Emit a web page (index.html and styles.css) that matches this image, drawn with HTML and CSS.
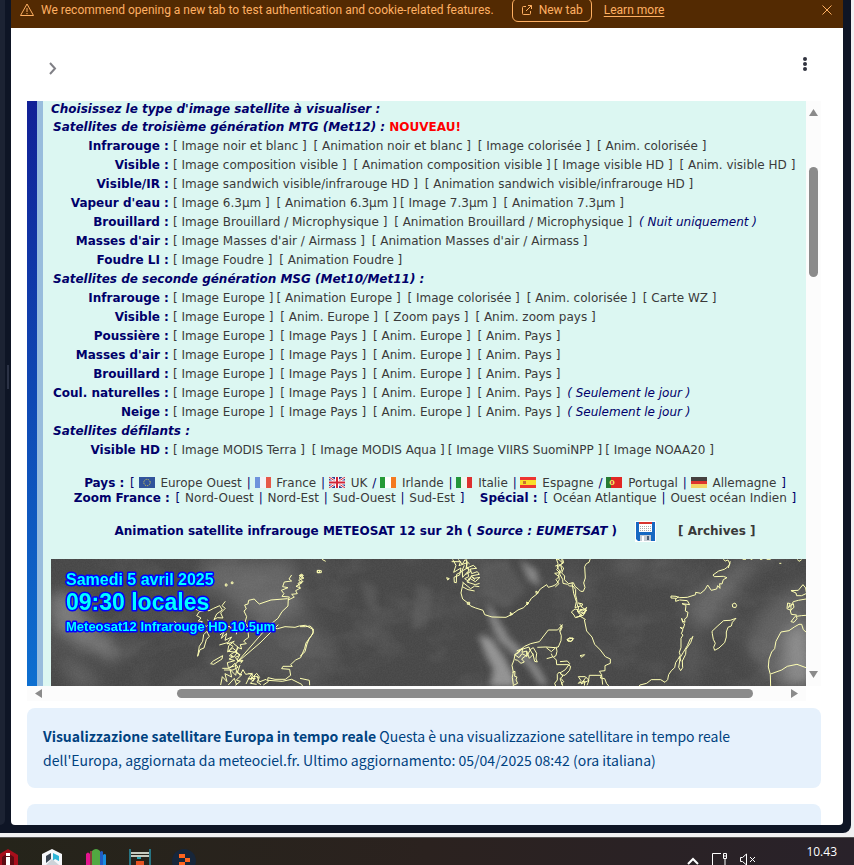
FILE: index.html
```
<!DOCTYPE html>
<html lang="it">
<head>
<meta charset="utf-8">
<meta name="viewport" content="width=device-width, initial-scale=1">
<title>Visualizzazione satellitare Europa</title>
<link rel="stylesheet" href="styles.css">
</head>
<body>
<div class="window">
  <div class="side-panel"></div>
  <div class="resizer"><span class="resizer-grip"></span></div>
  <div class="preview">
    <div class="notice">
      <svg class="notice-icon" width="16" height="16" viewBox="0 0 16 16" fill="none" stroke="currentColor"><path d="M8 2 1.500 13.500h13Z" stroke-linejoin="round"/><path d="M8 6v4M8 11v1.200"/></svg>
      <span class="notice-text">We recommend opening a new tab to test authentication and cookie-related features.</span>
      <button class="new-tab" type="button"><svg width="12" height="12" viewBox="0 0 12 12" fill="none" stroke="currentColor"><path d="M5 2.500H2.500a1 1 0 0 0-1 1v6a1 1 0 0 0 1 1h6a1 1 0 0 0 1-1V7M7 1.500h3.500V5M10.500 1.500 5 7"/></svg>New tab</button>
      <a class="learn" href="#">Learn more</a>
      <button class="close" type="button" aria-label="Close"><svg width="12" height="12" viewBox="0 0 12 12" stroke="currentColor" fill="none"><path d="m1.500 1.500 9 9m0-9-9 9"/></svg></button>
    </div>
    <header class="toolbar">
      <button class="icon-button expand" type="button" aria-label="Expand"><svg width="20" height="20" viewBox="0 0 20 20" fill="none" stroke="#808086" stroke-width="2"><path d="m7 5 5 5.500L7 16"/></svg></button>
      <button class="icon-button" type="button" aria-label="Menu"><svg width="20" height="20" viewBox="0 0 20 20" fill="#31333f"><circle cx="10" cy="5" r="2"/><circle cx="10" cy="10" r="2"/><circle cx="10" cy="15" r="2"/></svg></button>
    </header>
    <main class="content">
      <section class="frame">
        <div class="site">
          <div class="stripe-dark"></div>
          <div class="stripe-light"></div>
          <div class="page">
            <h1 class="choose">Choisissez le type d'image satellite à visualiser :</h1>
            <table class="types">
              <tbody>
              <tr><th class="group" colspan="2">Satellites de troisième génération MTG (Met12) : <span class="new">NOUVEAU!</span></th></tr>
              <tr><th>Infrarouge :</th><td><a href="#">[ Image noir et blanc ]</a> <a href="#">[ Animation noir et blanc ]</a> <a href="#">[ Image colorisée ]</a> <a href="#">[ Anim. colorisée ]</a></td></tr>
              <tr><th>Visible :</th><td><a href="#">[ Image composition visible ]</a> <a href="#">[ Animation composition visible ]</a><a href="#">[ Image visible HD ]</a> <a href="#">[ Anim. visible HD ]</a></td></tr>
              <tr><th>Visible/IR :</th><td><a href="#">[ Image sandwich visible/infrarouge HD ]</a> <a href="#">[ Animation sandwich visible/infrarouge HD ]</a></td></tr>
              <tr><th>Vapeur d'eau :</th><td><a href="#">[ Image 6.3µm ]</a> <a href="#">[ Animation 6.3µm ]</a><a href="#">[ Image 7.3µm ]</a> <a href="#">[ Animation 7.3µm ]</a></td></tr>
              <tr><th>Brouillard :</th><td><a href="#">[ Image Brouillard / Microphysique ]</a> <a href="#">[ Animation Brouillard / Microphysique ]</a> <i>( Nuit uniquement )</i></td></tr>
              <tr><th>Masses d'air :</th><td><a href="#">[ Image Masses d'air / Airmass ]</a> <a href="#">[ Animation Masses d'air / Airmass ]</a></td></tr>
              <tr><th>Foudre LI :</th><td><a href="#">[ Image Foudre ]</a> <a href="#">[ Animation Foudre ]</a></td></tr>
              <tr><th class="group" colspan="2">Satellites de seconde génération MSG (Met10/Met11) :</th></tr>
              <tr><th>Infrarouge :</th><td><a href="#">[ Image Europe ]</a><a href="#">[ Animation Europe ]</a> <a href="#">[ Image colorisée ]</a> <a href="#">[ Anim. colorisée ]</a> <a href="#">[ Carte WZ ]</a></td></tr>
              <tr><th>Visible :</th><td><a href="#">[ Image Europe ]</a> <a href="#">[ Anim. Europe ]</a> <a href="#">[ Zoom pays ]</a> <a href="#">[ Anim. zoom pays ]</a></td></tr>
              <tr><th>Poussière :</th><td><a href="#">[ Image Europe ]</a> <a href="#">[ Image Pays ]</a> <a href="#">[ Anim. Europe ]</a> <a href="#">[ Anim. Pays ]</a></td></tr>
              <tr><th>Masses d'air :</th><td><a href="#">[ Image Europe ]</a> <a href="#">[ Image Pays ]</a> <a href="#">[ Anim. Europe ]</a> <a href="#">[ Anim. Pays ]</a></td></tr>
              <tr><th>Brouillard :</th><td><a href="#">[ Image Europe ]</a> <a href="#">[ Image Pays ]</a> <a href="#">[ Anim. Europe ]</a> <a href="#">[ Anim. Pays ]</a></td></tr>
              <tr><th>Coul. naturelles :</th><td><a href="#">[ Image Europe ]</a> <a href="#">[ Image Pays ]</a> <a href="#">[ Anim. Europe ]</a> <a href="#">[ Anim. Pays ]</a> <i>( Seulement le jour )</i></td></tr>
              <tr><th>Neige :</th><td><a href="#">[ Image Europe ]</a> <a href="#">[ Image Pays ]</a> <a href="#">[ Anim. Europe ]</a> <a href="#">[ Anim. Pays ]</a> <i>( Seulement le jour )</i></td></tr>
              <tr><th class="group" colspan="2">Satellites défilants :</th></tr>
              <tr><th>Visible HD :</th><td><a href="#">[ Image MODIS Terra ]</a> <a href="#">[ Image MODIS Aqua ]</a><a href="#">[ Image VIIRS SuomiNPP ]</a><a href="#">[ Image NOAA20 ]</a></td></tr>
              </tbody>
            </table>
            <p class="regions"><b>Pays :</b> [
              <svg class="flag" viewBox="0 0 16 11"><path fill="#31539b" d="M0 0h16v11H0z"/><circle cx="8" cy="5.500" r="3.200" fill="none" stroke="#e3d44b" stroke-dasharray="1 1"/></svg> <a href="#">Europe Ouest</a> |
              <svg class="flag" viewBox="0 0 16 11"><path fill="#f2f3f7" d="M0 0h16v11H0z"/><path fill="#6f93dc" d="M0 0h5v11H0z"/><path fill="#e65848" d="M11 0h5v11h-5z"/></svg> <a href="#">France</a> |
              <svg class="flag" viewBox="0 0 16 11"><path fill="#2f4391" d="M0 0h16v11H0z"/><path stroke="#fff" stroke-width="2.500" d="m0 0 16 11M16 0 0 11"/><path stroke="#d22536" d="m0 0 16 11M16 0 0 11"/><path stroke="#fff" stroke-width="4" d="M8 0v11M0 5.500h16"/><path stroke="#d22536" stroke-width="2" d="M8 0v11M0 5.500h16"/></svg> <a href="#">UK</a> /
              <svg class="flag" viewBox="0 0 16 11"><path fill="#fff" d="M0 0h16v11H0z"/><path fill="#269a37" d="M0 0h5v11H0z"/><path fill="#f47a20" d="M11 0h5v11h-5z"/></svg> <a href="#">Irlande</a> |
              <svg class="flag" viewBox="0 0 16 11"><path fill="#f4f4f0" d="M0 0h16v11H0z"/><path fill="#23963a" d="M0 0h5v11H0z"/><path fill="#dd3030" d="M11 0h5v11h-5z"/></svg> <a href="#">Italie</a> |
              <svg class="flag" viewBox="0 0 16 11"><path fill="#ed3530" d="M0 0h16v11H0z"/><path fill="#fadd28" d="M0 3h16v5H0z"/><path fill="#c8702d" d="M3 4h3v3H3z"/></svg> <a href="#">Espagne</a> /
              <svg class="flag" viewBox="0 0 16 11"><path fill="#e12724" d="M0 0h16v11H0z"/><path fill="#277b32" d="M0 0h5v11H0z"/><circle cx="6" cy="5.500" r="2.500" fill="#f0e45c"/><path fill="#df4c4c" d="M5 4h2v3H5z"/></svg> <a href="#">Portugal</a> |
              <svg class="flag" viewBox="0 0 16 11"><path fill="#dd332f" d="M0 0h16v11H0z"/><path fill="#44403e" d="M0 0h16v4H0z"/><path fill="#f3d365" d="M0 7h16v4H0z"/></svg> <a href="#">Allemagne</a> ]</p>
            <p class="regions"><b>Zoom France :</b> [ <a href="#">Nord-Ouest</a> | <a href="#">Nord-Est</a> | <a href="#">Sud-Ouest</a> | <a href="#">Sud-Est</a> ] &nbsp;&nbsp; <b>Spécial :</b> [ <a href="#">Océan Atlantique</a> | <a href="#">Ouest océan Indien</a> ]</p>
            <div class="caption">
              <h2>Animation satellite infrarouge METEOSAT 12 sur 2h ( <i>Source : EUMETSAT</i> )</h2>
              <a href="#" aria-label="Enregistrer"><svg class="disk" width="21" height="21" viewBox="0 0 21 21"><path fill="#fff" d="M0 0h21v21H0z"/><path fill="#1769c2" d="M1 1h19v19H3l-2-2z"/><path fill="#fff" d="M4 2h13v9H4z"/><path fill="#d8342f" d="M4 1h13v2H4z"/><path stroke="#aaa" stroke-dasharray="1 1" d="M5 5.500h11M5 7.500h11M5 9.500h11"/><path fill="#c5ccd4" d="M5 14h11v6H5z"/><path fill="#4d5e75" d="M12 15h2v4h-2z"/><path fill="#fff" d="M7 15h2v5H7z"/></svg></a>
              <a href="#">[ Archives ]</a>
            </div>
            <svg class="satellite" viewBox="0 0 755 127" preserveAspectRatio="xMinYMin slice" role="img" aria-label="Image satellite infrarouge">
              <defs>
                <filter id="soft" x="-50%" y="-50%" width="200%" height="200%"><feGaussianBlur stdDeviation="24"/></filter>
                <filter id="mist" x="-50%" y="-50%" width="200%" height="200%"><feGaussianBlur stdDeviation="9"/></filter>
                <filter id="grain" x="0" y="0" width="100%" height="100%"><feTurbulence type="fractalNoise" baseFrequency=".7" numOctaves="2" seed="4"/><feColorMatrix values="0 0 0 0 .6  0 0 0 0 .6  0 0 0 0 .6  .5 0 0 0 -.12"/></filter>
                <filter id="streaks" x="0" y="0" width="100%" height="100%"><feTurbulence type="fractalNoise" baseFrequency=".02 .03" numOctaves="4" seed="9"/><feColorMatrix values="0 0 0 0 .75  0 0 0 0 .75  0 0 0 0 .75  1.600 0 0 0 -.75"/></filter>
              </defs>
              <path fill="#474747" d="M0 0h755v127H0z"/>
              <path d="M0 0h755v127H0z" filter="url(#streaks)" opacity=".15"/>
              <g transform="translate(-31 -9) scale(.3333)">
                <g fill="#aaa" filter="url(#soft)">
                  <path opacity=".5" d="M93 130h60l50 70 50 60 40 50-10 30-60-40-40-10-90-60z"/>
                  <path opacity=".3" d="M100 300l90 50 60 60h-80zM560 30h260l30 150-110 40-80-60-130-60z"/>
                  <path opacity=".12" d="M620 130l250 40 60 160-90 70-200-60z"/>
                </g>
              </g>
              <g transform="translate(249 -9) scale(.3333)">
                <g fill="#bbb" filter="url(#mist)">
                  <path opacity=".65" d="M535 255l35 10 45 60 25 50 10 35h-80l10-50-20-40z"/>
                  <path opacity=".55" d="M560 155l25 35 40 70 90 90 30 55h-25l-40-60-80-70-30-60zM660 30l50 30 10 50-35-20z"/>
                  <path opacity=".12" d="M350 100l50 20-20 110-45 10zM180 90l50 20v80l-30-20zM540 40l80-10 60 90-60 60-80-60z"/>
                </g>
              </g>
              <g transform="translate(509 -9) scale(.3333)">
                <g fill="#bbb" filter="url(#soft)">
                  <path opacity=".25" d="M170 28h100l-40 40-80-10zM490 80l40-50 80-2-80 90-60 90-60 40-40-80 60-70z"/>
                  <path opacity=".22" d="M590 200l60-60 100-50v320h-80l-70-60-40-60zM390 250l30 40-20 110h-25z"/>
                  <path opacity=".5" d="M670 250l50-30 35 20v165h-75z"/>
                </g>
              </g>
              <path d="M0 0h755v127H0z" filter="url(#grain)" opacity=".22"/>
              <g class="coast" transform="translate(-31 -9) scale(.3333)">
                <path d="M616 102h5v6h-5zM634 96h5v5h-5zM892 62h12v6h-12zM815 75l-8 12 8 6-22 3-5 14 16 3-20 8 8 10-6 8 22 2-3 9 18-9-8-8 17-2-5-9 15-8-14-5 17-10-9-8 16-7-15-7 9-5M848 72l-10 12 10 10-14 6 5 10M850 94l-12 8"/>
                <path d="M803 146l-50 4-35 12-10-9-5-6-17 4-2 11-10 3 5 12-7 6 8 17-5 18 8 12-8 8 9 6 2 18-15 11 8 8-18 3 4 13-13-5-3 16 11 8-14 6 9 12 14-3-7 9"/>
                <path d="M805 146l-1 22-18 17-12 20-15 12-15 10 5 7 24 2 22-6 30 2 13-4 18-2 21 11 3 9-7 13-15 20-4 16-12 28-15 7-15 14 5 5-28 0-4 7 24 2 3 18-16 12h-31l-21-5-1 8 44 3 28-6 30 15 5 10v15"/>
                <path d="M775 224l-55 55-68 58M741 233l-95 110 3 18M616 154l-10 13 10 8-14 14 7 15-17-1-10 6 8-17 17-12-8-13-18 8-15 8-7-10-8 10-13 2-8 12 13 7-8 9 12 2-7 10 20 4 9-9-6-11"/>
                <path d="M561 244l-10 10-3 20-10 15-5 30 7-20 12-5 7-25 9-10-5-9zM463 214l6 5-5 3M527 178l11 4"/>
                <path d="M600 255l12-10-8 20 16-15-5 21 20-10-14 21 22-8-17 13-3 19 15-12 11 9-18 11 9 6-13 7 17 5-22 6 3 15 19-5M598 285l24-7 17 11-14 15 27 3-10 14-15-4M572 341l8-8 28-16-2 10-25 16zM607 355h22l16-15 9 12-15 8h-27M640 280l15 12-8 15 13 7-9 16 16 5M615 240l12-12 10 12 16-13-4 26"/>
                <path d="M602 405l5-25 14 15-6-24 20 10-5-23 17 18 3-15 10 15 9-17 8 14 20-3-13 17 22-2-15 15 19 3M660 345l-8 24 14 5-17 16 12 4-15 12M625 405l18-20 7 20M678 402l9-18 13 9 4-15 14 5-7 13 12 8M685 370l13 4-5 13 17-17 9 12M711 378l7 18 20-8 7 7-15 10"/>
              </g>
              <g class="coast" transform="translate(249 -9) scale(.3333)">
                <path d="M66 28l11 6M52 61h7v7h-7zM440 83l8 3-5 4zM0 76h10l-9 12"/>
                <path d="M455 35h27l-5 12 25-9-4 17 22-9 10 9-19 2 4 14 17-6 6 8-25 5 10 7 17-3-14 13-18-11-7 12 25 8 13-4M458 28l10 18-7 21 22-13-4 21-17 7 1 15 6 1 1-25 17-9 1 18 15-17 3 15-12 6 12 8 7-15 12 10M475 28l12 15 8-14 14 13M493 46l-8 18 19-11 3 14M487 96l25 20 12-8 14 2M490 98l-3 12 17 9 20 4M500 28v24l13 12-17 10"/>
                <path d="M487 110l-4 19 5 18 17 13 7 8 15 6 22 7 5 13 22 7 42 1 18-9 18-13 17-7 17-18 6-10 17-13 10-15 19-13 5 8 14-4 10-5 9-14-2-14 4-12-8-11 2-12-5-13 8 2 10 9-3-21 10-9M502 157h7v6h-7zM631 187l7 6-7 3zM680 156l6 4-5 5zM708 123l7 5-7 2zM790 36l-8 8 3 14-6 14 9 16 1 12 14 3 6 5 10 0 8 10 0 18 3 12 2 17 4 9-4 9 7 10M766 48l14-4-10 15 9 9-15 2 13 10-9 9 9 12-11 10"/>
                <path d="M787 224l-14 16-28 0-27 35-26 6-18 8-17 14-12 11-3 16-6 16 4 20-3 16 3 22 0 20M787 224l-8 18 5 15-1 15-8 19-6 1 2 12-3 13-8 4 9 9 1 14 34 0 8 5-3 12-14 15-10-1-7-9-6 7 0 17-8 10 4 11-13 10-15-1M783 385l8 10-7 7 5 5M637 367l8-3-1 15 7 2-3 9 5 10-11 5M801 268l18-4-3 9-12 1zM0 230h17l13-2 10 9-1 14-11 14-7 17-6 23-15 14M0 385l28 6 1 15"/>
                <path d="M650 303l18-8-2 12 14-4 0 17 10-19-3-10-24 8-8 10-11 5 13 9 9-12 12 6-13 10 8 9-10 4-10-9-8-2M680 303l8 22 11-11-9-15 10-6 10 17-2 17 4 9-8-2-6-25M712 292l26-1 29 2-13 12-15-12M740 326l18-5-4-10"/>
              </g>
              <g class="coast" transform="translate(509 -9) scale(.3333)">
                <path d="M8 28l3 10-10 7 10 9-6 15 9 9-1 11 13 12 14-3 5 11 11 9 6 6h8l5-12-4-13 5-15-2-34 5-9 8-4 5-14 22-4 8-4M36 98l5 32 8 25-4 18 19-6-9-8 13 3-4 9 13 8-3 12-20-8 11 14-19 6-4-8-8-9 11-9 23 6 12-11-10 24-22 6M60 178l21 3-23 16 19 12M73 209l7 34 16 18 8 22 17 17 15 20 15 7v13l-16 7 0 15-17 2 7 10-4 10 13 2 6 15 10 11M125 376l3 28M125 376H88l-2 14-10-10-21 0 8 12-8 8 20-7-2 14M78 382l-15 20 24-11-6 15M0 335l22-2 7 8-13 18-16 10M60 317l14-3-8 8zM0 368l9 10-9 8 8 20"/>
                <path d="M22 269l7-6 12 3-9 9zM0 223l7 8-6 13M490 28l6 5 8-3 6 12-7 9-10 7-17 5-17 12 4 5 27-1 11 4-11 6-4 13-7-1 1 14-7-8-3 10-16 4-11-16-8 14-13 11-15-3 0 7-25 8-23 1-11-4-15-1v6l18 1 4-5M511 34l-6 20M360 150l22 2 7 12-23-3 12 5-2 17 8 4-3 15-7 5 1 10-7-4-3-8 3 12 6 5-4 13-10-3 9 7-5 12 5 4-6 10 0 28-5 14 3 10-8 12-6 9-3 15-10 9-8 12-3 15-8 8-13-8H274l-14 11-20 5-12 15-1 18M347 146v8l12-4M398 263l-7 3-9 21-12 20-9 15-5 30 6 10 6-9-1-20 10-20 1-15 14-20 7-20M358 320l5 14M456 244l18-17 17-15 20-1 17-6-11 12-3 11-10 4-5 14 0 15-5 17-17 16-13 7-3-9 5-12-6-12-3-17zM517 163l8-4 5 7-3 7-9-2z"/>
                <path d="M632 408l-1-35-6-22 2-23 8-22 9-10 4-22 15-28 24-4 16-11 14-8 8 0 5 16 8 7M632 372l33-12 17-11 29-6 27 10M738 131l-13 6h-15l-2-8-15-7 22-1 14-17 8 10 2 13M738 147l-23 4-15 4-7 12 0 14-12-5 2-17 8 2-6 12 15-12 2 11-11 10 3 11 16 2-6 6-11 14 9 2 9-11-2-7 15-2 14-1M548 28h10M572 28h5M600 28h7M658 40l6 0M620 28h12M712 28l5 6 8-5"/>
              </g>
              <g class="stamp">
                <text class="stamp-day" x="15" y="26">Samedi 5 avril 2025</text>
                <text class="stamp-hour" x="15" y="51">09:30 locales</text>
                <text class="stamp-source" x="15" y="72">Meteosat12 Infrarouge HD 10.5µm</text>
              </g>
            </svg>
          </div>
        </div>
        <div class="scroll scroll-y">
          <svg width="9" height="8" viewBox="0 0 9 8"><path d="M4.500 0 9 7H0z"/></svg>
          <div class="track"><span class="thumb"></span></div>
          <svg width="9" height="8" viewBox="0 0 9 8"><path d="M4.500 8 9 1H0z"/></svg>
        </div>
        <div class="scroll scroll-x">
          <svg width="8" height="9" viewBox="0 0 8 9"><path d="M0 4.500 7 0v9z"/></svg>
          <div class="track"><span class="thumb"></span></div>
          <svg width="8" height="9" viewBox="0 0 8 9"><path d="M8 4.500 1 0v9z"/></svg>
        </div>
      </section>
      <div class="info"><b>Visualizzazione satellitare Europa in tempo reale</b> Questa è una visualizzazione satellitare in tempo reale dell'Europa, aggiornata da meteociel.fr. Ultimo aggiornamento: 05/04/2025 08:42 (ora italiana)</div>
      <div class="info info-next"></div>
    </main>
  </div>
</div>
<footer class="taskbar">
  <div class="apps">
    <svg viewBox="0 0 24 16"><path fill="#a90f1c" d="m12 0 10 6v10H2V6z"/><path fill="#5c0c13" d="m12 4 6 4v8H6V8z"/><path fill="#fff" d="M10 4h4v3h-4zM10 8h4v8h-4z"/></svg>
    <svg viewBox="0 0 24 16"><path fill="#f5f7fa" d="m12 0 10 5v11H2V5z"/><path fill="#394553" d="m6 7 5-3v6l-5 4z"/><path fill="#2eb5d8" d="m13 4 6 3v5l-4-2-2 2z"/><path fill="#cdd3d9" d="m12 10 7 6H6z"/></svg>
    <svg viewBox="0 0 24 16"><path fill="#e5148e" d="M2 5q2-3 4 0v11H2z"/><path fill="#8a3c3b" d="M6 2h3v14H6z"/><path fill="#51a941" d="M8 2q4-4 8 0v14H8z"/><path fill="#235cc3" d="M16 3q2-2 3 0v13h-3z"/><path fill="#188de0" d="M19 6q2-2 3 0v10h-3z"/></svg>
    <svg viewBox="0 0 24 16"><path fill="#277483" d="M1 0h2v16H1zM21 0h2v16h-2z"/><path fill="#c7cbc0" d="M3 3h18v2H3zM3 6h18v2H3z"/><path fill="#29a5b4" d="M9 8h4v2H9z"/><path fill="#e65423" d="M8 12h8v4H8z"/></svg>
    <svg viewBox="0 0 24 16"><circle cx="12" cy="12" r="12" fill="#17263a"/><path fill="#ff641e" d="M7 5h6v4H7zM13 9h5v4h-5zM7 13h6v3H7z"/></svg>
  </div>
  <div class="tray">
    <svg width="12" height="8" viewBox="0 0 12 8" fill="none" stroke="#fff" stroke-width="2"><path d="m1 7 5-5 5 5"/></svg>
    <svg width="17" height="13" viewBox="0 0 17 13" fill="none" stroke="#fff"><path d="M10 1.500H1.500V13M12.500 1.500h3v5h-3zM12.500 4h3M14 7v6"/></svg>
    <svg width="16" height="12" viewBox="0 0 16 12" fill="none" stroke="#fff"><path d="M.5 4.500h2L6.500 1v11l-4-3.500h-2zM10 4l5 5m0-5-5 5"/></svg>
    <time>10.43</time>
  </div>
</footer>
</body>
</html>
```
FILE: styles.css
```
* { box-sizing: border-box; }
body {
  margin: 0;
  height: 100vh;
  display: flex;
  flex-direction: column;
  overflow: hidden;
  background: #f1f1f2;
  font-family: "Noto Sans CJK JP", sans-serif;
}
a { color: inherit; text-decoration: none; }
button { font: inherit; color: inherit; background: none; border: 0; padding: 0; }

.window {
  flex: 1;
  min-height: 0;
  display: grid;
  grid-template-columns: 5px 6px minmax(0, 1fr);
  grid-template-rows: minmax(0, 1fr);
  margin: 0 3px 4px 0;
  padding: 0 8px 8px 0;
  background: #0e1525;
  border-bottom-right-radius: 8px;
}
.side-panel { background: #1c2333; border-bottom-right-radius: 6px; }
.resizer { display: flex; align-items: center; justify-content: flex-end; padding-right: 2px; }
.resizer-grip { width: 2px; height: 24px; margin-top: -72px; background: #2b3245; }
.preview {
  display: flex;
  flex-direction: column;
  overflow: hidden;
  background: #fff;
  border-radius: 0 0 4px 4px;
}

.notice {
  flex: none;
  height: 36px;
  margin-top: -8px;
  padding: 0 10px 0 8px;
  display: flex;
  align-items: center;
  background: #532a02;
  color: #ffb062;
  font: 12px/18px Roboto, sans-serif;
  white-space: nowrap;
}
.notice-icon { margin-right: 6px; }
.new-tab {
  display: flex;
  align-items: center;
  gap: 6px;
  height: 24px;
  margin: 0 12px 0 18px;
  padding: 0 8px;
  border: 1px solid #ffb062;
  border-radius: 6px;
}
.learn { text-decoration: underline; text-underline-offset: 2px; }
.close { margin-left: auto; display: flex; }

.toolbar {
  flex: none;
  height: 73px;
  padding: 26px 28px 0 32px;
  display: flex;
  align-items: flex-start;
  justify-content: space-between;
}
.icon-button { display: flex; }
.expand { padding-top: 4px; }

.content { padding: 0 22px 0 16px; }
.frame {
  height: 600px;
  display: grid;
  grid-template-columns: minmax(0, 1fr) 15px;
  grid-template-rows: minmax(0, 1fr) 15px;
}
.site {
  display: grid;
  grid-template-columns: 10px 6px minmax(0, 1fr);
  overflow: hidden;
  background: #dcf7f2;
}
.stripe-dark { background: linear-gradient(#112096, #0d6fd0); }
.stripe-light { background: #98bddd; }
.page {
  margin-right: -13px;
  padding-left: 8px;
  display: flex;
  flex-direction: column;
  color: #00006a;
  font: 12px/15px "DejaVu Sans", sans-serif;
  white-space: nowrap;
}
.choose { margin: 0 0 1px; font: italic bold 12px/16px "DejaVu Sans", sans-serif; }
.types { border-collapse: collapse; align-self: flex-start; }
.types th, .types td { height: 19px; padding: 0 2px; text-align: left; }
.types th { text-align: right; }
.types .group { text-align: left; font-style: italic; }
.types a { margin-right: 3px; }
.new { color: #f00; font-style: normal; }
.page a { color: #3a3a3a; }
.regions { margin: 0; text-align: center; }
.regions a { margin: 0 1px; }
.regions b { margin-right: 2px; }
.types + .regions { margin-top: 16px; }
.flag { width: 16px; height: 11px; margin-right: 1px; vertical-align: -1px; }
.caption {
  display: flex;
  align-items: center;
  justify-content: center;
  gap: 18px;
  height: 26px;
  margin: 12px 0 15px;
  font-weight: bold;
}
.caption h2 { margin: 0; font-size: 12px; }
.caption a + a { margin-left: 4px; }
.disk { display: block; }
.satellite { flex: 1; min-height: 0; margin-right: 13px; }
.coast { fill: none; stroke: #ffffb4; stroke-width: 3; }
.stamp {
  fill: #0ff;
  stroke: #00f;
  stroke-width: 3px;
  stroke-linejoin: round;
  paint-order: stroke;
  font-family: "Liberation Sans", sans-serif;
  font-weight: bold;
}
.stamp-day { font-size: 16px; }
.stamp-hour { font-size: 23px; }
.stamp-source { font-size: 13px; }

.scroll { display: flex; align-items: center; background: #fcfcfc; }
.scroll svg { flex: none; fill: #8b8b8b; }
.track { flex: 1; display: flex; }
.thumb { background: #8b8b8b; border-radius: 5px; }
.scroll-y { flex-direction: column; padding: 8px 0; }
.scroll-y .thumb { width: 9px; height: 110px; margin-top: 50px; }
.scroll-x { padding: 0 8px; }
.scroll-x .thumb { width: 77%; height: 9px; margin-left: 18%; }

.info {
  margin-top: 16px;
  padding: 16px;
  border-radius: 8px;
  background: #e6f1fc;
  color: #004280;
  font-size: 14px;
  line-height: 24px;
}
.frame + .info { margin-top: 7px; }
.info-next { min-height: 80px; }

.taskbar {
  flex: none;
  height: 28px;
  display: flex;
  justify-content: space-between;
  overflow: hidden;
  border-top: 1px solid #555;
  background: linear-gradient(90deg, #25241a, #2b221f 50%, #29222a);
  color: #fff;
}
.apps { display: flex; gap: 20px; align-items: flex-end; margin-left: -4px; }
.apps svg { width: 24px; height: 16px; }
.tray { display: flex; align-items: center; gap: 12px; padding-right: 17px; }
.tray svg { align-self: flex-end; }
.tray time { margin-left: 38px; font: 12px/28px "Open Sans", sans-serif; }
```
